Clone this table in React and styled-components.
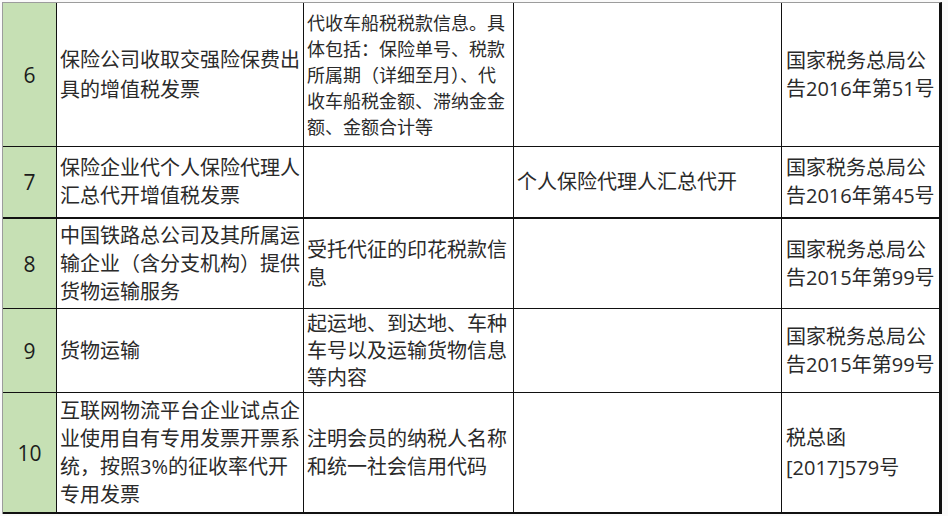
import React from "react";
import styled, { createGlobalStyle } from "styled-components";

const Global = createGlobalStyle`
  html, body { margin: 0; padding: 0; background: #ffffff; }
  body {
    font-family: "Open Sans", "Noto Sans CJK SC", sans-serif;
    color: #222;
  }
`;

const Page = styled.div`
  width: 948px;
  height: 516px;
  overflow: hidden;
  background: #fafafa;
  padding: 2px 0 0 2px;
  box-sizing: border-box;
`;

const Sheet = styled.div`
  display: flex;
  flex-direction: column;
  width: 940px;
  box-sizing: border-box;
  border-top: 1px solid #9c9c9c;
  border-left: 1px solid #9c9c9c;
  border-right: 3px solid #111;
  background: #fff;
`;

const Row = styled.div`
  display: grid;
  grid-template-columns: 54px 247px 210px 268px 157px;
  height: ${(p) => p.$h}px;
  box-sizing: border-box;
  border-bottom: ${(p) => (p.$thick ? 2 : 1)}px solid #111;
`;

const Cell = styled.div`
  display: flex;
  align-items: center;
  box-sizing: border-box;
  padding: 0 3px;
  border-right: 1px solid #111;
  background: #fff;
  font-size: ${(p) => p.$size || 20}px;
  line-height: ${(p) => p.$lh || 28}px;
  white-space: nowrap;
  color: #2a2a2a;
  &:last-child {
    border-right: none;
    padding-left: 4px;
  }
`;

const NumCell = styled(Cell)`
  justify-content: center;
  padding: 0;
  background: #c6e0b4;
  font-size: 21px;
  color: #1c1c1c;
`;

const Lines = styled.div`
  display: flex;
  flex-direction: column;
`;

const rows = [
  {
    n: "6",
    h: 144,
    a: ["保险公司收取交强险保费出", "具的增值税发票"],
    aLh: 30,
    b: [
      "代收车船税税款信息。具",
      "体包括：保险单号、税款",
      "所属期（详细至月）、代",
      "收车船税金额、滞纳金金",
      "额、金额合计等",
    ],
    bSize: 18,
    bLh: 26,
    c: [],
    d: ["国家税务总局公", "告2016年第51号"],
  },
  {
    n: "7",
    h: 72,
    thick: true,
    a: ["保险企业代个人保险代理人", "汇总代开增值税发票"],
    b: [],
    c: ["个人保险代理人汇总代开"],
    d: ["国家税务总局公", "告2016年第45号"],
  },
  {
    n: "8",
    h: 90,
    a: ["中国铁路总公司及其所属运", "输企业（含分支机构）提供", "货物运输服务"],
    b: ["受托代征的印花税款信", "息"],
    c: [],
    d: ["国家税务总局公", "告2015年第99号"],
  },
  {
    n: "9",
    h: 84,
    a: ["货物运输"],
    b: ["起运地、到达地、车种", "车号以及运输货物信息", "等内容"],
    bLh: 27,
    c: [],
    d: ["国家税务总局公", "告2015年第99号"],
  },
  {
    n: "10",
    h: 121,
    thick: true,
    a: [
      "互联网物流平台企业试点企",
      "业使用自有专用发票开票系",
      "统，按照3%的征收率代开",
      "专用发票",
    ],
    b: ["注明会员的纳税人名称", "和统一社会信用代码"],
    c: [],
    d: ["税总函", "[2017]579号"],
    dLh: 30,
  },
];

const Text = ({ lines }) => (
  <Lines>
    {lines.map((l, i) => (
      <span key={i}>{l}</span>
    ))}
  </Lines>
);

export default function App() {
  return (
    <>
      <Global />
      <Page>
        <Sheet>
          {rows.map((r) => (
            <Row key={r.n} $h={r.h} $thick={r.thick}>
              <NumCell>{r.n}</NumCell>
              <Cell $lh={r.aLh}>
                <Text lines={r.a} />
              </Cell>
              <Cell $size={r.bSize} $lh={r.bLh}>
                <Text lines={r.b} />
              </Cell>
              <Cell>
                <Text lines={r.c} />
              </Cell>
              <Cell $lh={r.dLh}>
                <Text lines={r.d} />
              </Cell>
            </Row>
          ))}
        </Sheet>
      </Page>
    </>
  );
}
